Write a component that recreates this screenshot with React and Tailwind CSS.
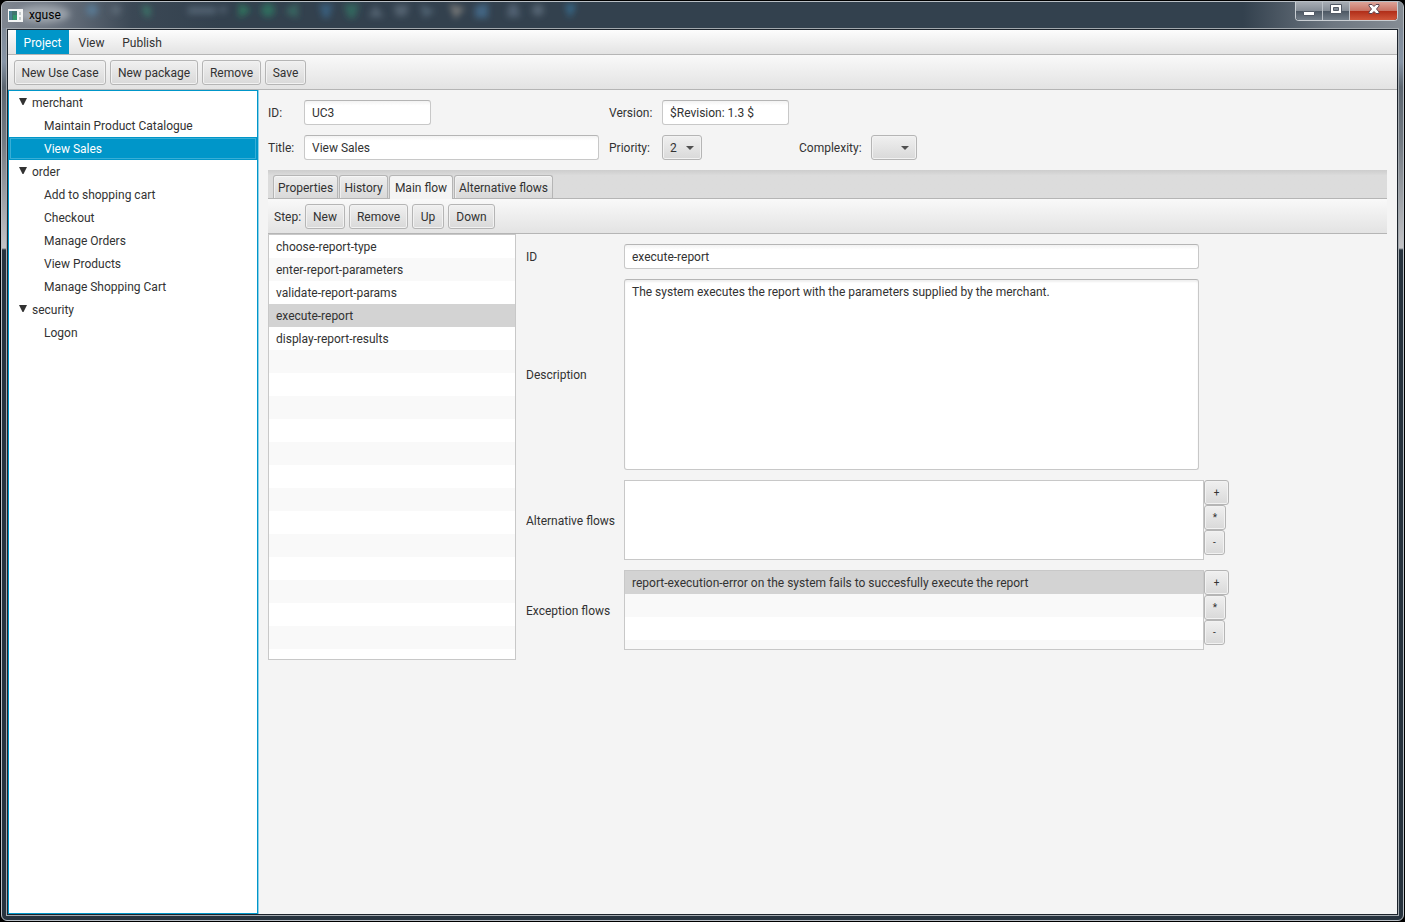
import { useState } from "react";
import clsx from "clsx";

const packages = [
  { name: "merchant", useCases: ["Maintain Product Catalogue", "View Sales"] },
  {
    name: "order",
    useCases: ["Add to shopping cart", "Checkout", "Manage Orders", "View Products", "Manage Shopping Cart"],
  },
  { name: "security", useCases: ["Logon"] },
];

const steps = [
  "choose-report-type",
  "enter-report-parameters",
  "validate-report-params",
  "execute-report",
  "display-report-results",
];

const exceptionFlows = [
  "report-execution-error on the system fails to succesfully execute the report",
];

const tabs = [
  { name: "Properties", width: "w-[65px]" },
  { name: "History", width: "w-[49px]" },
  { name: "Main flow", width: "w-[64px]" },
  { name: "Alternative flows", width: "w-[99px]" },
];

const Button = ({ className, children, ...props }) => (
  <button
    type="button"
    className={clsx(
      "h-[25px] shrink-0 whitespace-nowrap rounded-[3px] border border-[#b5b5b5] bg-linear-to-b from-[#f0f0f0] to-[#d9d9d9] pt-px text-center shadow-[inset_0_0_0_1px_#f2f2f2]",
      className
    )}
    {...props}
  >
    {children}
  </button>
);

const TextField = ({ className, ...props }) => (
  <input
    type="text"
    className={clsx(
      "h-[25px] rounded-[3px] border border-[#c8c8c8] border-t-[#b5b5b5] bg-linear-to-b from-[#f3f3f3] to-white to-20% px-[7px] outline-none",
      className
    )}
    {...props}
  />
);

const ComboBox = ({ id, className, options, ...props }) => (
  <div className={clsx("relative h-[25px]", className)}>
    <select
      id={id}
      className="h-full w-full appearance-none rounded-[3px] border border-[#b5b5b5] bg-linear-to-b from-[#f0f0f0] to-[#d9d9d9] pl-[7px] shadow-[inset_0_0_0_1px_#f2f2f2] outline-none"
      {...props}
    >
      {options.map((option) => (
        <option key={option}>{option}</option>
      ))}
    </select>
    <svg
      className="pointer-events-none absolute right-[8px] top-[11px]"
      width="8"
      height="4"
      viewBox="0 0 8 4"
      fill="#505050"
    >
      <path d="M0 0h8L4 4z" />
    </svg>
  </div>
);

// Striped list, padded with blank rows down to its bottom edge
const ListView = ({ label, items, selected, rowCount, onSelect, className }) => {
  const rows = Array.from({ length: rowCount }, (_, i) => items[i] ?? "");
  return (
    <ul
      role="listbox"
      aria-label={label}
      className={clsx("overflow-hidden border border-[#c8c8c8] bg-white", className)}
    >
      {rows.map((row, i) => (
        <li
          key={i}
          role={row ? "option" : "presentation"}
          aria-selected={row ? row === selected : undefined}
          onClick={() => row && onSelect?.(row)}
          className={clsx(
            "h-[23px] truncate px-[7px] leading-6",
            row && row === selected ? "bg-[#d3d3d3]" : i % 2 ? "bg-[#f9f9f9]" : "bg-white"
          )}
        >
          {row}
        </li>
      ))}
    </ul>
  );
};

const FlowButtons = () => (
  <div className="flex flex-col items-start text-[10px]">
    <Button className="w-[25px]" aria-label="Add">+</Button>
    <Button className="w-[22px]" aria-label="Edit">*</Button>
    <Button className="w-[21px]" aria-label="Delete">-</Button>
  </div>
);

// Toolbar of the window behind, showing through the glass
const GlassBackdrop = () => (
  <svg className="absolute left-0 top-0" width="600" height="26" aria-hidden="true">
    <defs>
      <filter id="glass" x="-50%" y="-50%" width="200%" height="200%">
        <feGaussianBlur stdDeviation="3" />
      </filter>
    </defs>
    <g filter="url(#glass)">
      <ellipse cx="38" cy="12" rx="26" ry="9" fill="#c3c8ce" opacity="0.55" />
      <g opacity="0.6">
        <circle cx="86" cy="8" r="6" fill="#5d8aae" />
        <circle cx="110" cy="8" r="5" fill="#6b7885" />
        <path d="M136 3l9 2-1 11-6-3z" fill="#3f8f75" />
        <path d="M182 5h28v7h-28zM212 5h10l-5 8z" fill="#68788a" />
        <path d="M233 1l12 7-12 8z" fill="#2f9a6b" />
        <circle cx="262" cy="8" r="7" fill="#2f8a69" />
        <path d="M281 6l11-5v15l-11-4z" fill="#3c7d6d" />
        <path d="M313 2h14l-4 14h-6z" fill="#3d719a" />
        <path d="M338 2h15l-4 14h-7z" fill="#358069" />
        <path d="M363 15l6-12 9 12z" fill="#6b7b8a" />
        <path d="M388 3h15l-3 11H390z" fill="#6b7887" />
        <path d="M414 2l15 7-11 7z" fill="#63788a" />
        <path d="M443 2l16 4-10 11z" fill="#a09a92" />
        <path d="M469 4l13-3v15h-13z" fill="#4c7da5" />
        <path d="M503 2h8l3 13h-13z" fill="#66778a" />
        <circle cx="532" cy="8" r="6" fill="#6d7d8d" />
        <path d="M559 2h11l-3 9-4 5z" fill="#3a80ac" />
      </g>
    </g>
  </svg>
);

const TitleBar = () => (
  <header className="relative flex h-[26px] items-start justify-between">
    <div className="absolute inset-y-0 -left-1 -right-1 rounded-t-[5px] bg-[linear-gradient(90deg,#7f8690_0px,#68717d_60px,#3b4855_130px,#33414e_220px,#33414e_calc(100%-160px),#6e7781_calc(100%-70px),#858c94_100%)]" />
    <GlassBackdrop />
    <div className="relative flex h-full items-center gap-[6px] pl-[2px]">
      <svg width="15" height="13" viewBox="0 0 15 13" aria-hidden="true">
        <path d="M0 0h15v13H0z" fill="#f4f6f6" />
        <path d="M1 2h8v9H1z" fill="#3f766f" />
        <path d="M1 2h3v9H1z" fill="#4b8193" />
        <path d="M5 6h4v5H5z" fill="#31966b" />
        <path d="M11 3h2v3h-2zM11 8h2v3h-2z" fill="#c5cccd" />
      </svg>
      <h1 className="text-black">xguse</h1>
    </div>
    <div className="relative mr-px flex h-[19px] rounded-b-[4px] border border-t-0 border-[#c9ced3] bg-[#20272f]">
      <button
        type="button"
        aria-label="Minimize"
        className="flex w-[27px] items-center justify-center rounded-bl-[3px] border-r border-[#bcc2c8] bg-[linear-gradient(#a7adb4,#858d96_48%,#4c5763_50%,#737e89)]"
      >
        <svg width="12" height="5" viewBox="0 0 12 5" className="mt-1">
          <path d="M.5 .5h11v4H.5z" fill="#fff" stroke="#525a66" />
        </svg>
      </button>
      <button
        type="button"
        aria-label="Maximize"
        className="flex w-[27px] items-center justify-center border-r border-[#bcc2c8] bg-[linear-gradient(#a7adb4,#858d96_48%,#4c5763_50%,#737e89)]"
      >
        <svg width="12" height="10" viewBox="0 0 12 10" className="mb-1">
          <path d="M.5 .5h11v9H.5z" fill="#fff" stroke="#525a66" />
          <path d="M3.500 3.500h5v3h-5z" fill="#7f8994" stroke="#525a66" />
        </svg>
      </button>
      <button
        type="button"
        aria-label="Close"
        className="flex w-[47px] items-center justify-center rounded-br-[3px] bg-[linear-gradient(#dda398,#c97465_48%,#b02d18_50%,#d0563a)]"
      >
        <svg width="12" height="10" viewBox="0 0 12 10" className="mb-1">
          <path
            d="M1 .5h3l2 2 2-2h3V2L8.500 5 11 8v1.500H8l-2-2-2 2H1V8l2.500-3L1 2z"
            fill="#fff"
            stroke="#5c4450"
          />
        </svg>
      </button>
    </div>
  </header>
);

const MenuBar = () => (
  <nav className="flex h-[25px] border-b border-[#b5b5b5] bg-linear-to-b from-[#fdfdfd] to-[#e3e3e3] pl-2">
    <button type="button" className="w-[53px] bg-[#0096c9] pt-px text-white">Project</button>
    <button type="button" className="w-[45px] pt-px">View</button>
    <button type="button" className="w-[56px] pt-px">Publish</button>
  </nav>
);

const UseCaseTree = ({ selected, onSelect }) => (
  <aside className="w-[250px] shrink-0 border border-[#0096c9] bg-white shadow-[1px_0_0_#8fd0e8]">
    <ul role="tree" aria-label="Use cases">
      {packages.map((pkg) => (
        <li key={pkg.name} role="treeitem" aria-expanded="true">
          <div className="flex h-[23px] items-center gap-[5px] pl-[10px]">
            <svg width="8" height="7" viewBox="0 0 8 7" fill="#323232" className="mb-[3px]">
              <path d="M0 0h8L4.500 7h-1z" />
            </svg>
            {pkg.name}
          </div>
          <ul role="group">
            {pkg.useCases.map((useCase) => (
              <li
                key={useCase}
                role="treeitem"
                aria-selected={useCase === selected}
                onClick={() => onSelect(useCase)}
                className={clsx(
                  "h-[23px] pl-[35px] leading-6",
                  useCase === selected &&
                    "bg-[#0096c9] text-white outline outline-[#38aed6] -outline-offset-2"
                )}
              >
                {useCase}
              </li>
            ))}
          </ul>
        </li>
      ))}
    </ul>
  </aside>
);

const UseCaseForm = () => (
  <div className="grid grid-cols-[36px_305px_53px_137px_72px_46px] items-center gap-y-[10px]">
    <label htmlFor="uc-id">ID:</label>
    <TextField id="uc-id" className="w-[127px]" defaultValue="UC3" />
    <label htmlFor="uc-version">Version:</label>
    <TextField id="uc-version" className="w-[127px]" defaultValue="$Revision: 1.3 $" />
    <label htmlFor="uc-title" className="col-start-1">Title:</label>
    <TextField id="uc-title" className="w-[295px]" defaultValue="View Sales" />
    <label htmlFor="uc-priority">Priority:</label>
    <ComboBox id="uc-priority" className="w-[40px]" options={["1", "2", "3"]} defaultValue="2" />
    <label htmlFor="uc-complexity">Complexity:</label>
    <ComboBox id="uc-complexity" className="w-[46px]" options={["", "1", "2", "3"]} defaultValue="" />
  </div>
);

const TabHeader = ({ active, onChange }) => (
  <div
    role="tablist"
    className="flex h-[29px] items-end gap-px border-b border-[#b5b5b5] bg-linear-to-b from-[#cdcdcd] to-[#dcdcdc] to-20% pl-[5px]"
  >
    {tabs.map((tab) => (
      <button
        key={tab.name}
        type="button"
        role="tab"
        aria-selected={tab.name === active}
        onClick={() => onChange(tab.name)}
        className={clsx(
          "whitespace-nowrap rounded-t-[3px] border border-b-0 border-[#b5b5b5] pt-px",
          tab.width,
          tab.name === active
            ? "-mb-px h-[24px] bg-[#f4f4f4]"
            : "h-[23px] bg-linear-to-b from-[#eeeeee] to-[#d9d9d9] shadow-[inset_0_1px_0_#f6f6f6,inset_1px_0_0_#f0f0f0]"
        )}
      >
        {tab.name}
      </button>
    ))}
  </div>
);

const StepDetails = () => (
  <div className="grid grid-cols-[98px_1fr] items-center gap-y-[10px] pt-[10px]">
    <label htmlFor="step-id">ID</label>
    <TextField id="step-id" className="w-[575px]" defaultValue="execute-report" />

    <label htmlFor="step-description">Description</label>
    <textarea
      id="step-description"
      className="block h-[191px] w-[575px] resize-none rounded-[3px] border border-[#c8c8c8] border-t-[#b5b5b5] bg-white px-[7px] py-1 leading-4 shadow-[inset_0_2px_2px_#f0f0f0] outline-none"
      defaultValue="The system executes the report with the parameters supplied by the merchant."
    />

    <span className="pt-0.5">Alternative flows</span>
    <div className="flex">
      <ListView label="Alternative flows" items={[]} rowCount={0} className="h-[80px] w-[580px]" />
      <FlowButtons />
    </div>

    <span className="pt-0.5">Exception flows</span>
    <div className="flex">
      <ListView
        label="Exception flows"
        items={exceptionFlows}
        selected={exceptionFlows[0]}
        rowCount={4}
        className="h-[80px] w-[580px]"
      />
      <FlowButtons />
    </div>
  </div>
);

function App() {
  const [useCase, setUseCase] = useState("View Sales");
  const [tab, setTab] = useState("Main flow");
  const [step, setStep] = useState("execute-report");

  return (
    <div className="flex min-h-screen bg-black p-px font-[Roboto,'Noto_Sans',sans-serif] text-[12px] leading-4 text-[#323232]">
      <div className="flex flex-1 flex-col rounded-[6px] border border-[#b9bfc5] bg-[linear-gradient(#7b838d_0px,#8795a6_60px,#5c6670_85px,#737b83_140px,#c3c3c6_246px,#27333e_248px)] px-1 pb-1">
        <TitleBar />
        <div className="flex flex-1 flex-col border border-[#a3a9ae]">
          <div className="flex flex-1 flex-col border border-[#1c232b] bg-[#f4f4f4]">
            <MenuBar />
            <div className="flex h-[35px] items-center gap-1 border-b border-[#b5b5b5] bg-linear-to-b from-[#f9f9f9] to-[#e3e3e3] pl-[6px]">
              <Button className="w-[92px]">New Use Case</Button>
              <Button className="w-[88px]">New package</Button>
              <Button className="w-[59px]">Remove</Button>
              <Button className="w-[41px]">Save</Button>
            </div>
            <div className="flex flex-1">
              <UseCaseTree selected={useCase} onSelect={setUseCase} />
              <main className="flex-1 p-[10px]">
                <UseCaseForm />
                <div className="mt-[10px]">
                  <TabHeader active={tab} onChange={setTab} />
                  <div className="flex h-[35px] items-center gap-1 border-b border-[#b5b5b5] bg-linear-to-b from-[#f9f9f9] to-[#e3e3e3] pl-[6px]">
                    <span className="w-[27px] pt-0.5">Step:</span>
                    <Button className="w-[40px]">New</Button>
                    <Button className="w-[59px]">Remove</Button>
                    <Button className="w-[32px]">Up</Button>
                    <Button className="w-[47px]">Down</Button>
                  </div>
                  <div className="flex items-start gap-[10px]">
                    <ListView
                      label="Steps"
                      items={steps}
                      selected={step}
                      onSelect={setStep}
                      rowCount={19}
                      className="h-[426px] w-[248px] shrink-0"
                    />
                    <StepDetails />
                  </div>
                </div>
              </main>
            </div>
          </div>
        </div>
      </div>
    </div>
  );
}

export default App;
